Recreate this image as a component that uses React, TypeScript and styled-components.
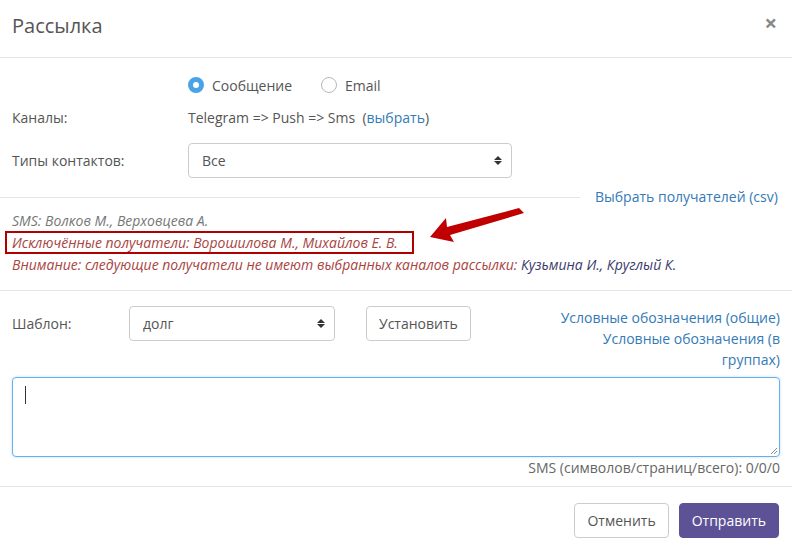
import React from "react";
import styled, { createGlobalStyle } from "styled-components";

const GlobalStyle = createGlobalStyle`
  html, body {
    margin: 0;
    padding: 0;
    background: #fff;
  }
  body {
    font-family: "Open Sans", "Liberation Sans", sans-serif;
    font-size: 14px;
    color: #555;
  }
  * {
    box-sizing: border-box;
  }
`;

const App = () => {
  return (
    <>
      <GlobalStyle />
      <Modal>
        <Header>
          <Title>Рассылка</Title>
          <Close>×</Close>
        </Header>

        <Section>
          <RadioRow>
            <Radio checked />
            <RadioLabel>Сообщение</RadioLabel>
            <Radio />
            <RadioLabel>Email</RadioLabel>
          </RadioRow>
          <FormRow height={40}>
            <Label>Каналы:</Label>
            <Value>
              Telegram =&gt; Push =&gt; Sms&nbsp; (<Link>выбрать</Link>)
            </Value>
          </FormRow>
          <FormRow height={46}>
            <Label>Типы контактов:</Label>
            <Select width={324}>
              Все
              <Caret />
            </Select>
          </FormRow>
        </Section>

        <RecipientsBar>
          <Rule />
          <Link>
            Выбрать получателей (<Link>csv</Link>)
          </Link>
        </RecipientsBar>

        <Notes>
          <Note>SMS: Волков М., Верховцева А.</Note>
          <Note tone="danger" boxed>
            Исключённые получатели: Ворошилова М., Михайлов Е. В.
          </Note>
          <Note tone="danger">
            Внимание: следующие получатели не имеют выбранных каналов
            рассылки: <Names>Кузьмина И., Круглый К.</Names>
          </Note>
          <Arrow width="100" height="40" viewBox="0 0 100 40">
            <path
              d="M93 4 L98 9 L24 31 L28 38 L4 33 L20 14 L21 23 Z"
              fill="#c00000"
            />
          </Arrow>
        </Notes>

        <Divider />

        <TemplateSection>
          <TemplateRow>
            <Label width={117}>Шаблон:</Label>
            <Select width={206}>
              долг
              <Caret />
            </Select>
            <Button>Установить</Button>
            <Legend>
              <Link>Условные обозначения (общие)</Link>
              <Link>Условные обозначения (в группах)</Link>
            </Legend>
          </TemplateRow>
          <TextArea>
            <Cursor />
            <Grip width="8" height="8" viewBox="0 0 8 8">
              <path d="M7 1 L1 7 M7 4 L4 7" stroke="#888" strokeWidth="1" />
            </Grip>
          </TextArea>
          <Counter>SMS (символов/страниц/всего): 0/0/0</Counter>
        </TemplateSection>

        <Footer>
          <Button>Отменить</Button>
          <Button primary>Отправить</Button>
        </Footer>
      </Modal>
    </>
  );
};

export default App;

const Modal = styled.div`
  width: 792px;
  height: 551px;
  background: #fff;
  overflow: hidden;
`;

const Header = styled.div`
  height: 58px;
  padding: 0 14px 0 12px;
  display: flex;
  align-items: center;
  justify-content: space-between;
  border-bottom: 1px solid #e5e5e5;
`;

const Title = styled.div`
  font-size: 20px;
  color: #555;
  margin-top: -6px;
`;

const Close = styled.div`
  font-size: 22px;
  font-weight: 700;
  color: #888;
  margin-top: -14px;
  margin-right: 1px;
`;

const Section = styled.div`
  padding: 15px 12px 0;
`;

const RadioRow = styled.div`
  display: flex;
  align-items: center;
  height: 24px;
  padding-left: 176px;
`;

const Radio = styled.span<{ checked?: boolean }>`
  width: 16px;
  height: 16px;
  border-radius: 50%;
  margin-right: 8px;
  border: ${({ checked }) => (checked ? "5px solid #4aa3e6" : "1px solid #b8b8b8")};
  background: #fff;
`;

const RadioLabel = styled.span`
  margin-right: 29px;
`;

const FormRow = styled.div<{ height: number }>`
  display: flex;
  align-items: center;
  height: ${({ height }) => height}px;
`;

const Label = styled.div<{ width?: number }>`
  width: ${({ width }) => width || 176}px;
  flex-shrink: 0;
`;

const Value = styled.div``;

const Link = styled.span`
  color: #337ab7;
`;

const Select = styled.div<{ width: number }>`
  position: relative;
  width: ${({ width }) => width}px;
  height: 35px;
  border: 1px solid #ccc;
  border-radius: 4px;
  padding: 0 13px;
  display: flex;
  align-items: center;
  color: #555;
`;

const Caret = styled.span`
  position: absolute;
  right: 13px;
  top: 12px;
  width: 0;
  height: 9px;
  &::before,
  &::after {
    content: "";
    position: absolute;
    left: -4px;
    border-left: 4px solid transparent;
    border-right: 4px solid transparent;
  }
  &::before {
    top: 0;
    border-bottom: 4px solid #333;
  }
  &::after {
    top: 5px;
    border-top: 4px solid #333;
  }
`;

const RecipientsBar = styled.div`
  display: flex;
  align-items: center;
  padding: 6px 13px 0 0;
  height: 20px;
`;

const Rule = styled.div`
  width: 580px;
  border-top: 1px solid #e5e5e5;
  margin-right: 15px;
  align-self: flex-start;
  margin-top: 8px;
`;

const Notes = styled.div`
  position: relative;
  padding: 7px 12px 0;
  height: 87px;
`;

const Note = styled.div<{ tone?: "danger"; boxed?: boolean }>`
  font-style: italic;
  line-height: 21px;
  font-size: 14px;
  color: ${({ tone }) => (tone === "danger" ? "#a94442" : "#777")};
  ${({ boxed }) =>
    boxed
      ? `
    display: inline-block;
    border: 2px solid #b00000;
    margin-left: -7px;
    padding: 0 14px 0 5px;
    line-height: 19px;
  `
      : ""}
`;

const Names = styled.span`
  color: #3b3a6b;
`;

const Arrow = styled.svg`
  position: absolute;
  left: 426px;
  top: 1px;
`;

const Divider = styled.div`
  border-top: 1px solid #e5e5e5;
`;

const TemplateSection = styled.div`
  padding: 15px 12px 0;
`;

const TemplateRow = styled.div`
  display: flex;
  align-items: flex-start;
  height: 71px;
  & > ${Label} {
    line-height: 35px;
  }
`;

const Button = styled.div<{ primary?: boolean }>`
  height: 35px;
  padding: 0 12px;
  display: flex;
  align-items: center;
  border-radius: 4px;
  border: 1px solid ${({ primary }) => (primary ? "#5e5297" : "#ccc")};
  background: ${({ primary }) => (primary ? "#5e5297" : "#fff")};
  color: ${({ primary }) => (primary ? "#fff" : "#555")};
  flex-shrink: 0;
  ${TemplateRow} & {
    margin-left: 31px;
  }
`;

const Legend = styled.div`
  margin-left: auto;
  width: 224px;
  text-align: right;
  line-height: 21px;
  margin-top: 1px;
  display: flex;
  flex-direction: column;
`;

const TextArea = styled.div`
  position: relative;
  height: 80px;
  border: 1px solid #66afe9;
  border-radius: 4px;
  box-shadow: 0 0 3px rgba(102, 175, 233, 0.4);
`;

const Cursor = styled.div`
  position: absolute;
  left: 12px;
  top: 8px;
  width: 1px;
  height: 18px;
  background: #333;
`;

const Grip = styled.svg`
  position: absolute;
  right: 1px;
  bottom: 1px;
`;

const Counter = styled.div`
  text-align: right;
  line-height: 22px;
  color: #666;
  padding-bottom: 7px;
  border-bottom: 1px solid #e5e5e5;
  margin: 0 -12px;
  padding-right: 12px;
`;

const Footer = styled.div`
  display: flex;
  justify-content: flex-end;
  gap: 10px;
  padding: 16px 13px 0;
`;
